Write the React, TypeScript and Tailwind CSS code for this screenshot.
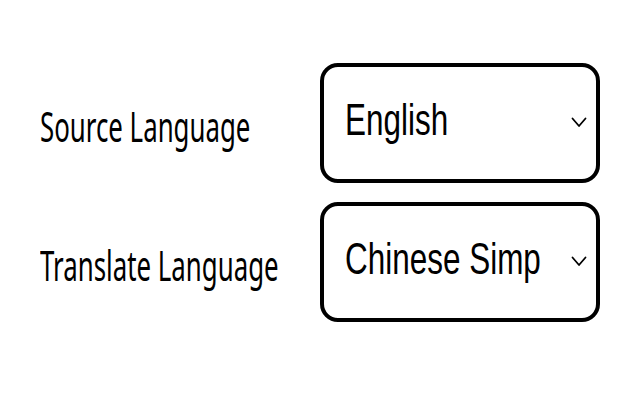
import React from 'react';

const rows = [
  { label: 'Source Language', value: 'English' },
  { label: 'Translate Language', value: 'Chinese Simp' },
];

function Chevron() {
  return (
    <svg width="16" height="11" viewBox="0 0 16 11" fill="none" className="shrink-0">
      <path d="M1.5 1.5 L8 9 L14.5 1.5" stroke="#000" strokeWidth="1.8" strokeLinecap="round" strokeLinejoin="round" />
    </svg>
  );
}

function LangSelect({ value }: { value: string }) {
  return (
    <div className="flex h-[120px] w-[280px] items-center rounded-[18px] border-[4px] border-black bg-white pl-[21px] pr-[9px]">
      <div className="w-[210px] whitespace-nowrap pb-[6px]">
        <span className="inline-block origin-left scale-x-[0.715] text-[44px] leading-[1.2] text-black font-['Liberation_Sans',Arial,sans-serif]">
          {value}
        </span>
      </div>
      <div className="flex flex-1 justify-end pb-[2px]">
        <Chevron />
      </div>
    </div>
  );
}

export default function App() {
  return (
    <div className="h-[400px] w-[640px] bg-white pl-[40px] pt-[63px]">
      <div className="flex flex-col gap-[19px]">
        {rows.map((row) => (
          <div key={row.label} className="flex items-center">
            <div className="w-[280px] whitespace-nowrap pt-[6px]">
              <span className="inline-block origin-left scale-x-[0.615] text-[42px] leading-none text-black font-['Noto_Sans',sans-serif]">
                {row.label}
              </span>
            </div>
            <LangSelect value={row.value} />
          </div>
        ))}
      </div>
    </div>
  );
}
